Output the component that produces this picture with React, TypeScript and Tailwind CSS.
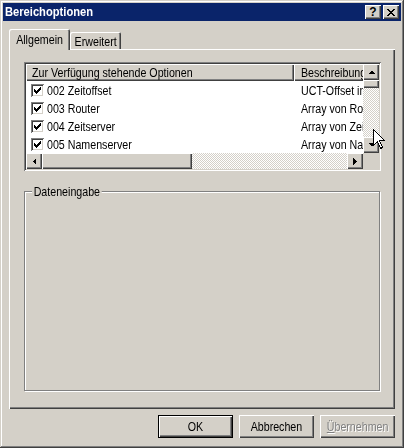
import React from 'react';

const raised =
  'bg-[#d4d0c8] shadow-[inset_1px_1px_#ffffff,inset_-1px_-1px_#404040,inset_-2px_-2px_#808080]';
const dither =
  'bg-[repeating-conic-gradient(#d4d0c8_0%_25%,#ffffff_0%_50%)] bg-size-[2px_2px]';

const rows = [
  { name: '002 Zeitoffset', desc: 'UCT-Offset in Sekunden' },
  { name: '003 Router', desc: 'Array von Routeradressen' },
  { name: '004 Zeitserver', desc: 'Array von Zeitservern' },
  { name: '005 Namenserver', desc: 'Array von Namenservern' },
];

// no narrow font installed, so squeeze Liberation Sans to Arial Narrow proportions
function T({ children, center, className = '' }: { children: React.ReactNode; center?: boolean; className?: string }) {
  return (
    <span
      className={`inline-block whitespace-nowrap scale-x-[0.82] ${center ? 'origin-center' : 'origin-left'} ${className}`}
    >
      {children}
    </span>
  );
}

function Arrow({ dir }: { dir: 'up' | 'down' | 'left' | 'right' }) {
  const pts = {
    up: '0,4 7,4 3.5,0.5',
    down: '0,0 7,0 3.5,3.5',
    left: '4,0 4,7 0.5,3.5',
    right: '0,0 0,7 3.5,3.5',
  }[dir];
  const vertical = dir === 'up' || dir === 'down';
  return (
    <div className={`w-[16px] h-[16px] shrink-0 flex items-center justify-center ${raised}`}>
      <svg width={vertical ? 7 : 4} height={vertical ? 4 : 7} shapeRendering="crispEdges">
        <polygon points={pts} fill="#000" />
      </svg>
    </div>
  );
}

function Checkbox() {
  return (
    <div className="w-[13px] h-[13px] shrink-0 bg-white shadow-[inset_1px_1px_#808080,inset_-1px_-1px_#ffffff,inset_2px_2px_#404040,inset_-2px_-2px_#d4d0c8] flex items-center justify-center">
      <svg width="7" height="7" viewBox="0 0 7 7" shapeRendering="crispEdges">
        <path d="M0 2h1v1h1v1h1v-1h1v-1h1v-1h1v-1h1v3h-1v1h-1v1h-1v1h-1v1h-1v-1h-1v-1h-1z" fill="#000" />
      </svg>
    </div>
  );
}

function Button({ label, isDefault, disabled }: { label: React.ReactNode; isDefault?: boolean; disabled?: boolean }) {
  return (
    <div
      className={`w-[75px] h-[23px] flex items-center justify-center ${raised} ${
        isDefault ? 'border border-black' : ''
      } ${disabled ? 'text-[#808080] [text-shadow:1px_1px_0_#ffffff]' : 'text-black'}`}
    >
      <T center>{label}</T>
    </div>
  );
}

export default function App() {
  return (
    <div className="relative w-[404px] h-[448px] bg-[#d4d0c8] p-[3px] flex flex-col text-[13px] leading-none text-black font-['Liberation_Sans',Arial,sans-serif] shadow-[inset_-1px_-1px_#404040,inset_1px_1px_#d4d0c8,inset_-2px_-2px_#808080,inset_2px_2px_#ffffff]">
      {/* Title bar */}
      <div className="h-[18px] bg-[#0a246a] flex items-center justify-between pl-[2px] pr-[2px]">
        <span className="inline-block origin-left scale-x-[0.93] text-white font-bold text-[12px]">Bereichoptionen</span>
        <div className="flex gap-[2px]">
          <div className={`w-[16px] h-[14px] flex items-center justify-center font-bold text-[12px] ${raised}`}>?</div>
          <div className={`w-[16px] h-[14px] flex items-center justify-center ${raised}`}>
            <svg width="8" height="7" viewBox="0 0 8 7" shapeRendering="crispEdges">
              <path d="M0 0h2l2 2.5l2-2.5h2l-3 3.5l3 3.5h-2l-2-2.5l-2 2.5h-2l3-3.5z" fill="#000" />
            </svg>
          </div>
        </div>
      </div>

      {/* Tabs */}
      <div className="h-[28px] flex items-end pl-[6px]">
        <div className="relative z-10 -mb-[1px] w-[61px] h-[21px] bg-[#d4d0c8] rounded-t-[2px] shadow-[inset_1px_1px_#ffffff,inset_-1px_0_#404040,inset_-2px_0_#808080] flex items-start justify-center pt-[4px]">
          <T center>Allgemein</T>
        </div>
        <div className="w-[51px] h-[17px] bg-[#d4d0c8] rounded-t-[2px] shadow-[inset_1px_1px_#ffffff,inset_-1px_0_#404040,inset_-2px_0_#808080] flex items-start justify-center pt-[3px]">
          <T center>Erweitert</T>
        </div>
      </div>

      {/* Panel */}
      <div className="mx-[6px] h-[360px] pt-[13px] pl-[15px] shadow-[inset_1px_1px_#ffffff,inset_-1px_-1px_#404040,inset_-2px_-2px_#808080]">
        {/* List view */}
        <div className="w-[357px] h-[109px] p-[2px] bg-white shadow-[inset_1px_1px_#808080,inset_-1px_-1px_#ffffff,inset_2px_2px_#404040,inset_-2px_-2px_#d4d0c8]">
          <div className="flex">
            <div className="w-[337px] overflow-hidden">
              <div className="flex h-[17px]">
                <div className={`w-[268px] shrink-0 flex items-center pl-[6px] ${raised}`}>
                  <T>Zur Verfügung stehende Optionen</T>
                </div>
                <div className={`w-[120px] shrink-0 flex items-center pl-[7px] ${raised}`}>
                  <T>Beschreibung</T>
                </div>
              </div>
              {rows.map((r) => (
                <div key={r.name} className="flex h-[18px] items-center">
                  <div className="w-[268px] shrink-0 flex items-center pl-[5px] gap-[3px]">
                    <Checkbox />
                    <T>{r.name}</T>
                  </div>
                  <div className="pl-[7px]">
                    <T>{r.desc}</T>
                  </div>
                </div>
              ))}
            </div>
            <div className="w-[16px] flex flex-col">
              <Arrow dir="up" />
              <div className={`h-[8px] ${raised}`} />
              <div className={`flex-1 ${dither}`} />
              <Arrow dir="down" />
            </div>
          </div>
          <div className="flex h-[16px]">
            <Arrow dir="left" />
            <div className={`w-[150px] ${raised}`} />
            <div className={`flex-1 ${dither}`} />
            <Arrow dir="right" />
            <div className="w-[16px] bg-[#d4d0c8]" />
          </div>
        </div>

        {/* Group box */}
        <div className="relative mt-[20px] w-[356px] h-[200px] border border-[#808080] shadow-[1px_1px_0_#ffffff,inset_1px_1px_0_#ffffff]">
          <T className="absolute -top-[7px] left-[7px] px-[2px] bg-[#d4d0c8]">Dateneingabe</T>
        </div>
      </div>

      {/* Buttons */}
      <div className="mt-[6px] flex justify-end gap-[6px] pr-[6px]">
        <Button label="OK" isDefault />
        <Button label="Abbrechen" />
        <Button
          label={
            <>
              <span className="underline">Ü</span>bernehmen
            </>
          }
          disabled
        />
      </div>

      {/* Mouse cursor */}
      <svg className="absolute left-[373px] top-[129px]" width="13" height="22" viewBox="0 0 13 22" shapeRendering="crispEdges">
        <path d="M0.5 0.5 L0.5 16.5 L4.5 12.5 L7.5 19.5 L9.5 18.5 L6.5 11.5 L11.5 11.5 Z" fill="#fff" stroke="#000" strokeWidth="1" />
      </svg>
    </div>
  );
}
